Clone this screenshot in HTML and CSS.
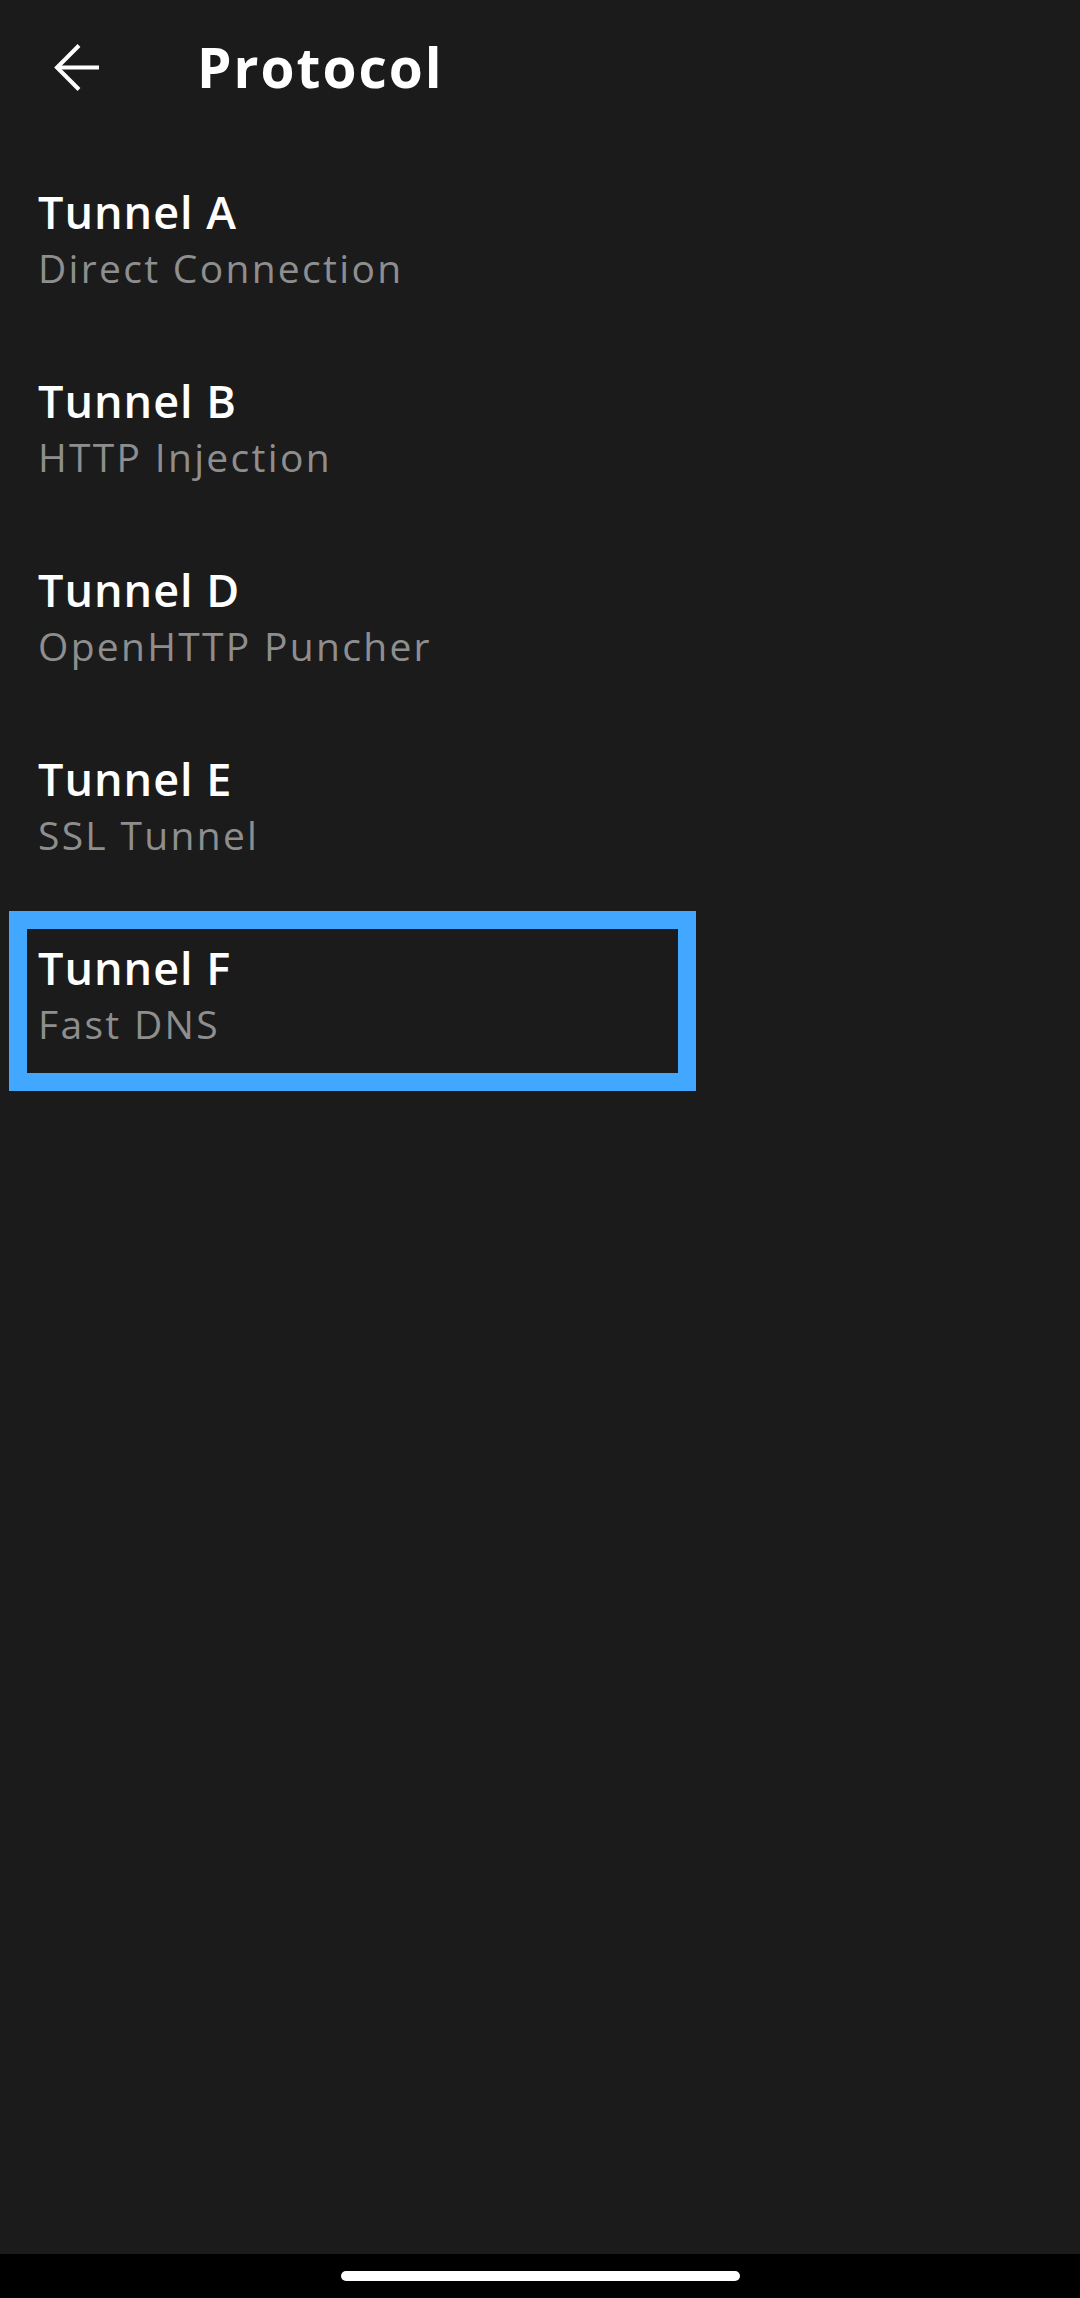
FILE: index.html
```html
<!DOCTYPE html>
<html lang="en">
<head>
<meta charset="utf-8">
<title>Protocol</title>
<link rel="stylesheet" href="styles.css">
</head>
<body>
<div class="screen">
  <header class="toolbar">
    <svg class="back" width="48" height="48" viewBox="0 0 48 48" aria-hidden="true">
      <polyline points="27,2.5 5,24.5 27,46.5" fill="none" stroke="#ffffff" stroke-width="4"/>
      <line x1="5" y1="24.5" x2="47" y2="24.5" stroke="#ffffff" stroke-width="4"/>
    </svg>
    <h1 class="title">Protocol</h1>
  </header>
  <ul class="list">
    <li class="row"><span class="row-title">Tunnel A</span><span class="row-sub">Direct Connection</span></li>
    <li class="row"><span class="row-title">Tunnel B</span><span class="row-sub">HTTP Injection</span></li>
    <li class="row"><span class="row-title">Tunnel D</span><span class="row-sub">OpenHTTP Puncher</span></li>
    <li class="row"><span class="row-title">Tunnel E</span><span class="row-sub">SSL Tunnel</span></li>
    <li class="row focused"><span class="row-title">Tunnel F</span><span class="row-sub">Fast DNS</span></li>
  </ul>
  <div class="navbar"><div class="handle"></div></div>
</div>
</body>
</html>
```

FILE: styles.css
```css
*, *::before, *::after { box-sizing: border-box; }
html, body {
  margin: 0;
  padding: 0;
  background: #1b1b1b;
}
body {
  font-family: "Open Sans", "Noto Sans", sans-serif;
  color: #ffffff;
}
.screen {
  display: flex;
  flex-direction: column;
  min-height: 2298px;
}
.toolbar {
  height: 134px;
  display: flex;
  align-items: center;
  padding-left: 52px;
}
.back {
  display: block;
  flex: none;
}
.title {
  margin: 0 0 0 97px;
  font-size: 55px;
  line-height: 64px;
  font-weight: 700;
  letter-spacing: 2px;
}
.list {
  list-style: none;
  margin: 0;
  padding: 12px 0 0 0;
  flex: 1;
}
.row {
  position: relative;
  height: 189px;
  padding: 38.5px 0 0 38px;
  display: flex;
  flex-direction: column;
}
.row-title {
  font-size: 45px;
  line-height: 54px;
  font-weight: 600;
  letter-spacing: 1px;
}
.row-sub {
  font-size: 39px;
  line-height: 58px;
  font-weight: 400;
  color: #8e8e8e;
  letter-spacing: 2.3px;
}
.row.focused::after {
  content: "";
  position: absolute;
  left: 9px;
  top: 9px;
  width: 687px;
  bottom: 0;
  border: 18px solid #42a7ff;
}
.navbar {
  height: 44px;
  background: #000000;
  display: flex;
  justify-content: center;
  padding-top: 17px;
}
.handle {
  width: 399px;
  height: 10px;
  border-radius: 5px;
  background: #ffffff;
}
```
